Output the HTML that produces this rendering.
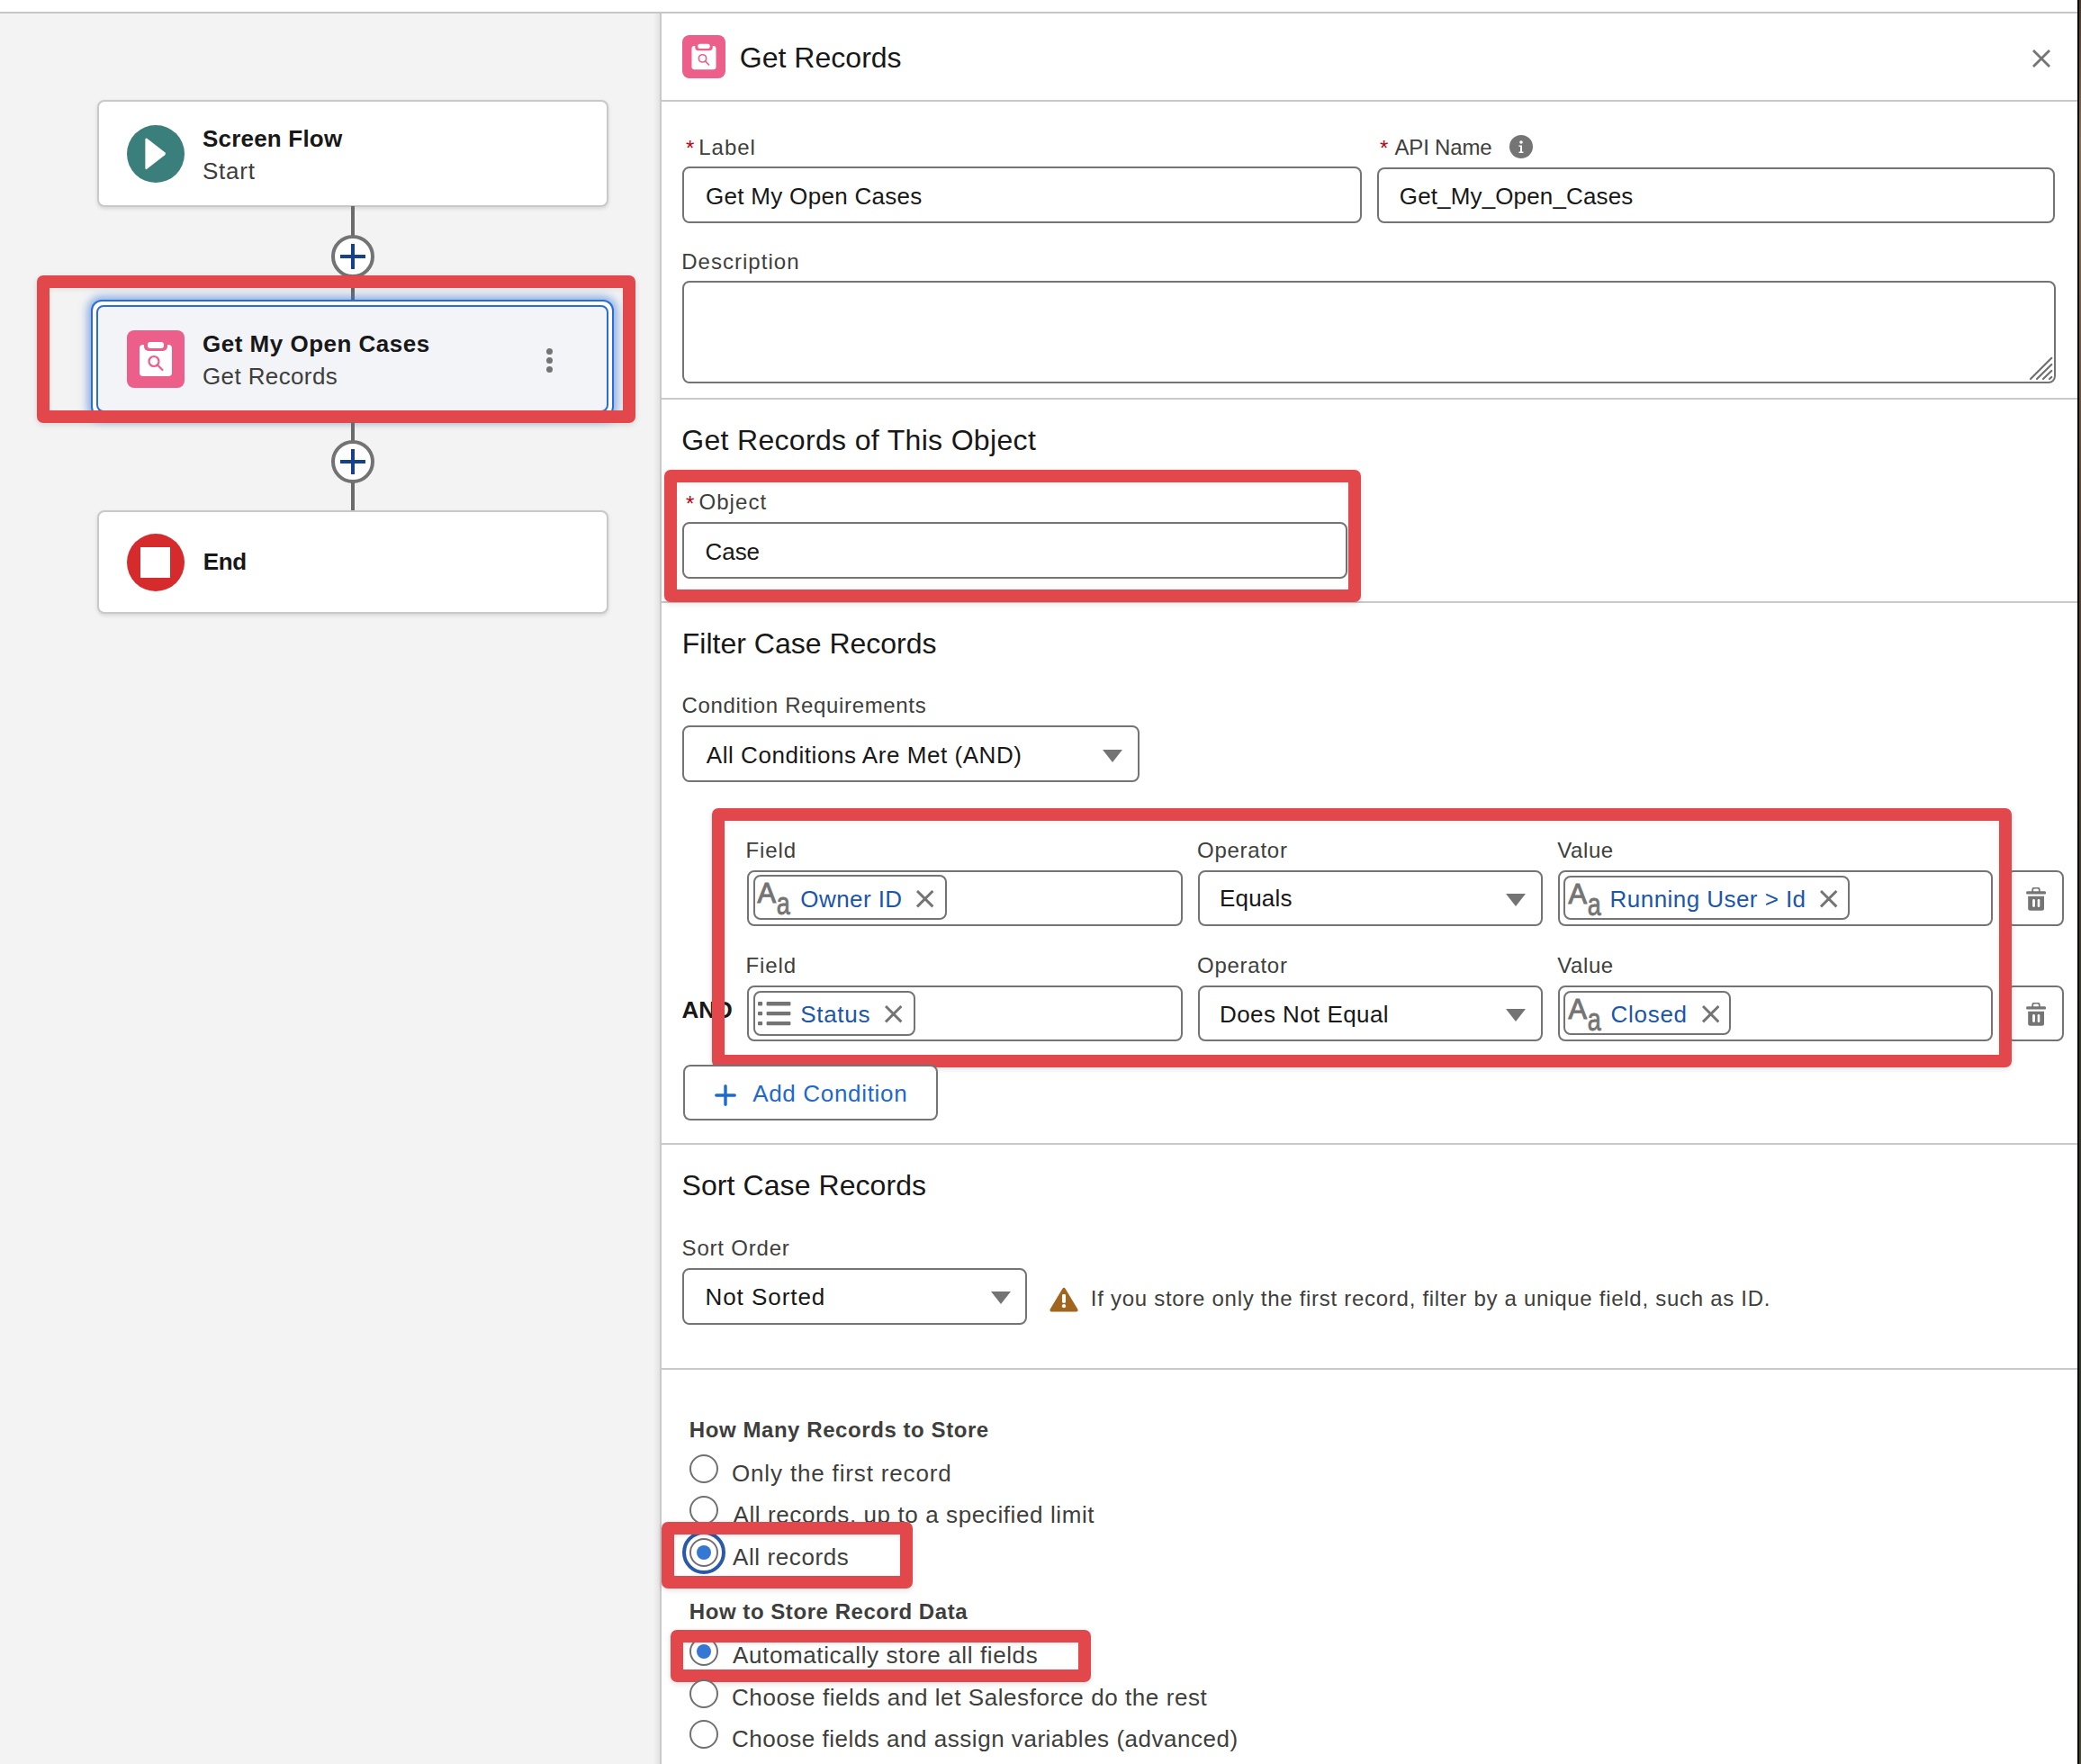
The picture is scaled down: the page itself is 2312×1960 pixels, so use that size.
<!DOCTYPE html>
<html><head><meta charset="utf-8">
<style>
*{box-sizing:border-box;margin:0;padding:0}
html,body{width:2312px;height:1960px;overflow:hidden;background:#fff;font-family:"Liberation Sans",sans-serif}
.a{position:absolute}
.t{position:absolute;white-space:pre;line-height:1;font-family:"Liberation Sans",sans-serif}
.s26{font-size:26px}
.s24{font-size:24px}
.s32{font-size:32px}
.dk{color:#181818}
.lb{color:#3e3e3c}
.req{color:#ba0517}
.lnk{color:#1b56aa}
.inp{position:absolute;border:2px solid #747474;border-radius:8px;background:#fff}
.pill{position:absolute;border:2px solid #747474;border-radius:8px;background:#fff}
.rbox{position:absolute;border:14px solid #e2474c;border-radius:7px;box-shadow:0 2px 6px rgba(0,0,0,.12),inset 0 2px 5px rgba(0,0,0,.07)}
.div{position:absolute;left:734px;width:1574px;height:2px;background:#c9c9c9}
.card{position:absolute;background:#fff;border:2px solid #c9c9c9;border-radius:8px;box-shadow:0 2px 4px rgba(0,0,0,.12)}
.conn{position:absolute;left:390px;width:4px;background:#6b6b6b}
.plus{position:absolute;left:368px;width:48px;height:48px;border:4px solid #737373;border-radius:50%;background:#fff}
.radio{position:absolute;left:766px;width:32px;height:32px;border:2px solid #707070;border-radius:50%;background:#fff}
</style></head><body>
<!-- top strip -->
<div class="a" style="left:0;top:0;width:2312px;height:13px;background:#fff"></div>
<div class="a" style="left:0;top:13px;width:2308px;height:2px;background:#c6c6c6"></div>
<!-- canvas -->
<div class="a" style="left:0;top:15px;width:734px;height:1945px;background:#f3f3f3"></div>
<div class="a" style="left:726px;top:15px;width:8px;height:1945px;background:linear-gradient(to right,rgba(0,0,0,0),rgba(0,0,0,.08))"></div>
<div class="a" style="left:733px;top:15px;width:2px;height:1945px;background:#c9c9c9"></div>
<!-- right dark strip -->
<div class="a" style="left:2308px;top:0;width:1.5px;height:1960px;background:#050403"></div>
<div class="a" style="left:2309.5px;top:0;width:2.5px;height:1960px;background:linear-gradient(#4a3a28,#8a7258 8%,#5a4631 30%,#3a3a2a 60%,#2d3a28 85%,#4a4a30)"></div>

<!-- CANVAS CONTENT -->
<div id="canvas">
<!-- start card -->
<div class="card" style="left:108px;top:111px;width:568px;height:119px"></div>
<div class="a" style="left:141px;top:139px;width:64px;height:64px;border-radius:50%;background:#3a7f7b"></div>
<svg class="a" style="left:141px;top:139px" width="64" height="64" viewBox="0 0 64 64"><path d="M20.4 16.3 Q20.4 13.6 22.6 15.1 L42.2 30.2 Q43.8 31.7 42.2 33.3 L22.6 48.6 Q20.4 50.1 20.4 47.4Z" fill="#fff"/></svg>
<div class="t s26" style="left:225.0px;top:140.5px;font-weight:700;color:#181818;letter-spacing:0.200px">Screen Flow</div>
<div class="t s26" style="left:225.0px;top:177px;color:#3e3e3c;letter-spacing:0.750px">Start</div>
<!-- connector 1 -->
<div class="conn" style="top:229px;height:34px"></div>
<div class="plus" style="top:261px"></div>
<div class="a" style="left:378px;top:283px;width:28px;height:4px;background:#17428a"></div>
<div class="a" style="left:390px;top:271px;width:4px;height:28px;background:#17428a"></div>
<div class="conn" style="top:308px;height:30px"></div>
<!-- selected card -->
<div class="a" style="left:101px;top:333px;width:581px;height:131px;border:2px solid #2a6dd6;border-radius:12px;background:#fff;box-shadow:0 0 10px 4px rgba(42,109,214,.5)"></div>
<div class="a" style="left:107px;top:339px;width:569px;height:119px;border:2px solid #2a6dd6;border-radius:8px;background:#f3f4f8"></div>
<div class="a" style="left:141px;top:367px;width:64px;height:64px;border-radius:8px;background:#ec5f8a"></div>
<svg class="a" style="left:141px;top:367px" width="64" height="64" viewBox="0 0 64 64">
<rect x="14" y="16" width="36" height="35" rx="4" fill="#fff"/>
<rect x="19" y="11" width="26" height="12" rx="5" fill="#ec5f8a"/>
<rect x="23" y="13" width="18" height="7" rx="3" fill="#fff"/>
<circle cx="30" cy="34.5" r="5.5" fill="none" stroke="#ec5f8a" stroke-width="2.2"/>
<line x1="34" y1="38.5" x2="39.5" y2="44" stroke="#ec5f8a" stroke-width="2.2" stroke-linecap="round"/>
</svg>
<div class="t s26" style="left:225.0px;top:369px;font-weight:700;color:#181818;letter-spacing:0.500px">Get My Open Cases</div>
<div class="t s26" style="left:225.0px;top:404.5px;color:#3e3e3c;letter-spacing:0.380px">Get Records</div>
<div class="a" style="left:607.3px;top:386.5px;width:7px;height:7px;border-radius:50%;background:#747474"></div>
<div class="a" style="left:607.3px;top:396.5px;width:7px;height:7px;border-radius:50%;background:#747474"></div>
<div class="a" style="left:607.3px;top:406.5px;width:7px;height:7px;border-radius:50%;background:#747474"></div>
<!-- red box 1 -->
<div class="rbox" style="left:41px;top:306px;width:665px;height:164px"></div>
<!-- connector 2 -->
<div class="conn" style="top:469px;height:22px"></div>
<div class="plus" style="top:489px"></div>
<div class="a" style="left:378px;top:511px;width:28px;height:4px;background:#17428a"></div>
<div class="a" style="left:390px;top:499px;width:4px;height:28px;background:#17428a"></div>
<div class="conn" style="top:536px;height:33px"></div>
<!-- end card -->
<div class="card" style="left:108px;top:567px;width:568px;height:115px"></div>
<div class="a" style="left:141px;top:593px;width:64px;height:64px;border-radius:50%;background:#d62b2d"></div>
<div class="a" style="left:156px;top:608px;width:33px;height:34px;background:#fff"></div>
<div class="t s26" style="left:225.7px;top:611px;font-weight:700;color:#181818;letter-spacing:-0.350px">End</div>
</div>

<!-- PANEL CONTENT -->
<div id="panel">
<!-- header -->
<div class="a" style="left:758px;top:39px;width:48px;height:48px;border-radius:8px;background:#ec5f8a"></div>
<svg class="a" style="left:758px;top:39px" width="48" height="48" viewBox="0 0 64 64">
<rect x="14" y="16" width="36" height="35" rx="4" fill="#fff"/>
<rect x="19" y="11" width="26" height="12" rx="5" fill="#ec5f8a"/>
<rect x="23" y="13" width="18" height="7" rx="3" fill="#fff"/>
<circle cx="30" cy="34.5" r="5.5" fill="none" stroke="#ec5f8a" stroke-width="2.2"/>
<line x1="34" y1="38.5" x2="39.5" y2="44" stroke="#ec5f8a" stroke-width="2.2" stroke-linecap="round"/>
</svg>
<div class="t s32 dk" style="left:821.8px;top:48px;letter-spacing:0.020px">Get Records</div>
<svg class="a" style="left:2258px;top:55px" width="20" height="20" viewBox="0 0 20 20"><path d="M1 1L19 19M19 1L1 19" stroke="#747474" stroke-width="2.8"/></svg>
<div class="div" style="top:111px"></div>

<!-- label / api name -->
<div class="t s24 req" style="left:762px;top:153px">*</div>
<div class="t s24 lb" style="left:776.2px;top:151.7px;letter-spacing:1.0px">Label</div>
<div class="inp" style="left:758px;top:185px;width:755px;height:63px"></div>
<div class="t s26 dk" style="left:784.0px;top:204.8px;letter-spacing:0.300px">Get My Open Cases</div>
<div class="t s24 req" style="left:1533px;top:153px">*</div>
<div class="t s24 lb" style="left:1549.5px;top:151.7px;letter-spacing:-0.186px">API Name</div>
<div class="a" style="left:1677px;top:150px;width:26px;height:26px;border-radius:50%;background:#747474"></div>
<svg class="a" style="left:1677px;top:150px" width="26" height="26" viewBox="0 0 26 26"><circle cx="13" cy="8" r="1.8" fill="#fff"/><path d="M10.5 11.5h3.5v7h1.5v1.5h-5v-1.5h1.5v-5.5h-1.5z" fill="#fff"/></svg>
<div class="inp" style="left:1530px;top:186px;width:753px;height:62px"></div>
<div class="t s26 dk" style="left:1554.8px;top:204.8px;letter-spacing:0.138px">Get_My_Open_Cases</div>

<!-- description -->
<div class="t s24 lb" style="left:757.2px;top:278.7px;letter-spacing:1.030px">Description</div>
<div class="inp" style="left:758px;top:312px;width:1526px;height:114px"></div>
<svg class="a" style="left:2250px;top:392px" width="34" height="34" viewBox="0 0 34 34"><path d="M6 29L29.3 5.8M13 29L29.3 13M20 29L29.3 20M27 29L29.3 27" stroke="#707070" stroke-width="2.2" stroke-linecap="round"/></svg>
<div class="div" style="top:442px"></div>

<!-- object -->
<div class="t s32 dk" style="left:757.2px;top:472.9px;letter-spacing:0.33px">Get Records of This Object</div>
<div class="t s24 req" style="left:762px;top:548px">*</div>
<div class="t s24 lb" style="left:776.4px;top:546.4px;letter-spacing:1.100px">Object</div>
<div class="inp" style="left:758px;top:580px;width:739px;height:63px"></div>
<div class="t s26 dk" style="left:783.6px;top:600.2px;letter-spacing:-0.100px">Case</div>
<div class="div" style="top:668px"></div>
<div class="rbox" style="left:738px;top:522px;width:774px;height:147px"></div>

<!-- filter -->
<div class="t s32 dk" style="left:757.8px;top:698.6px;letter-spacing:0.0px">Filter Case Records</div>
<div class="t s24 lb" style="left:757.6px;top:772.3px;letter-spacing:0.648px">Condition Requirements</div>
<div class="inp" style="left:758px;top:806px;width:508px;height:63px"></div>
<div class="t s26 dk" style="left:784.8px;top:826.3px;letter-spacing:0.552px">All Conditions Are Met (AND)</div>
<svg class="a" style="left:1225px;top:833px" width="22" height="14" viewBox="0 0 22 14"><path d="M0 0H22L11 14Z" fill="#747474"/></svg>

<!-- conditions -->
<div class="t s24 lb" style="left:828.6px;top:933.2px;letter-spacing:0.850px">Field</div>
<div class="t s24 lb" style="left:1330.0px;top:933.2px;letter-spacing:0.743px">Operator</div>
<div class="t s24 lb" style="left:1730.2px;top:933.2px;letter-spacing:0.600px">Value</div>
<div class="inp" style="left:830px;top:967px;width:484px;height:62px"></div>
<div class="pill" style="left:836.5px;top:972.3px;width:215px;height:50px"></div>
<div class="t s26 lnk" style="left:889.3px;top:985.5px;letter-spacing:0.429px">Owner ID</div>
<div class="inp" style="left:1330.5px;top:967px;width:383px;height:62px"></div>
<div class="t s26 dk" style="left:1355.0px;top:985.3px;letter-spacing:0.200px">Equals</div>
<svg class="a" style="left:1673px;top:993px" width="22" height="14" viewBox="0 0 22 14"><path d="M0 0H22L11 14Z" fill="#747474"/></svg>
<div class="inp" style="left:1730.5px;top:967px;width:483px;height:62px"></div>
<div class="pill" style="left:1737px;top:973px;width:318px;height:49px"></div>
<div class="t s26 lnk" style="left:1788.6px;top:985.5px;letter-spacing:0.450px">Running User &gt; Id</div>
<div class="inp" style="left:2229px;top:967px;width:64px;height:62px"></div>

<div class="t s24 lb" style="left:828.6px;top:1061px;letter-spacing:0.850px">Field</div>
<div class="t s24 lb" style="left:1330.0px;top:1061px;letter-spacing:0.743px">Operator</div>
<div class="t s24 lb" style="left:1730.2px;top:1061px;letter-spacing:0.600px">Value</div>
<div class="t s26" style="left:757.5px;top:1109px;font-weight:700;color:#181818">AND</div>
<div class="inp" style="left:830px;top:1095px;width:484px;height:62px"></div>
<div class="pill" style="left:836.5px;top:1100.5px;width:180px;height:50px"></div>
<div class="t s26 lnk" style="left:889.2px;top:1114px;letter-spacing:0.720px">Status</div>
<div class="inp" style="left:1330.5px;top:1095px;width:383px;height:62px"></div>
<div class="t s26 dk" style="left:1355.0px;top:1113.5px;letter-spacing:0.423px">Does Not Equal</div>
<svg class="a" style="left:1673px;top:1121px" width="22" height="14" viewBox="0 0 22 14"><path d="M0 0H22L11 14Z" fill="#747474"/></svg>
<div class="inp" style="left:1730.5px;top:1095px;width:483px;height:62px"></div>
<div class="pill" style="left:1737px;top:1101px;width:186px;height:49px"></div>
<div class="t s26 lnk" style="left:1789.6px;top:1114px;letter-spacing:0.700px">Closed</div>
<div class="inp" style="left:2229px;top:1095px;width:64px;height:62px"></div>
<div id="icons">
<svg class="a" style="left:841.5px;top:980px;overflow:visible" width="40" height="40" viewBox="0 0 40 40"><text x="-0.5" y="23.2" font-family="Liberation Sans" font-size="32" fill="#747474" stroke="#747474" stroke-width="1.1" textLength="20.5" lengthAdjust="spacingAndGlyphs">A</text><text x="20.8" y="35.6" font-family="Liberation Sans" font-size="34.5" fill="#747474" stroke="#747474" stroke-width="0.8" textLength="15" lengthAdjust="spacingAndGlyphs">a</text></svg>
<svg class="a" style="left:1018.4px;top:989.3px" width="19.4" height="19.4" viewBox="0 0 19.4 19.4"><path d="M1 1L18.4 18.4M18.4 1L1 18.4" stroke="#747474" stroke-width="2.9"/></svg>
<svg class="a" style="left:1742.5px;top:980.5px;overflow:visible" width="40" height="40" viewBox="0 0 40 40"><text x="-0.5" y="23.2" font-family="Liberation Sans" font-size="32" fill="#747474" stroke="#747474" stroke-width="1.1" textLength="20.5" lengthAdjust="spacingAndGlyphs">A</text><text x="20.8" y="35.6" font-family="Liberation Sans" font-size="34.5" fill="#747474" stroke="#747474" stroke-width="0.8" textLength="15" lengthAdjust="spacingAndGlyphs">a</text></svg>
<svg class="a" style="left:2022.4px;top:989.3px" width="19.4" height="19.4" viewBox="0 0 19.4 19.4"><path d="M1 1L18.4 18.4M18.4 1L1 18.4" stroke="#747474" stroke-width="2.9"/></svg>
<svg class="a" style="left:841.7px;top:1112.7px" width="37" height="27" viewBox="0 0 37 27"><rect x="0" y="0.0" width="5.1" height="4.4" rx="1" fill="#747474"/><rect x="9.6" y="0.0" width="26.8" height="4.4" rx="1.2" fill="#747474"/><rect x="0" y="10.899999999999999" width="5.1" height="4.4" rx="1" fill="#747474"/><rect x="9.6" y="10.899999999999999" width="26.8" height="4.4" rx="1.2" fill="#747474"/><rect x="0" y="21.900000000000002" width="5.1" height="4.4" rx="1" fill="#747474"/><rect x="9.6" y="21.900000000000002" width="26.8" height="4.4" rx="1.2" fill="#747474"/></svg>
<svg class="a" style="left:983.3px;top:1117.2px" width="19.4" height="19.4" viewBox="0 0 19.4 19.4"><path d="M1 1L18.4 18.4M18.4 1L1 18.4" stroke="#747474" stroke-width="2.9"/></svg>
<svg class="a" style="left:1742.5px;top:1108.5px;overflow:visible" width="40" height="40" viewBox="0 0 40 40"><text x="-0.5" y="23.2" font-family="Liberation Sans" font-size="32" fill="#747474" stroke="#747474" stroke-width="1.1" textLength="20.5" lengthAdjust="spacingAndGlyphs">A</text><text x="20.8" y="35.6" font-family="Liberation Sans" font-size="34.5" fill="#747474" stroke="#747474" stroke-width="0.8" textLength="15" lengthAdjust="spacingAndGlyphs">a</text></svg>
<svg class="a" style="left:1890.7px;top:1117.2px" width="19.4" height="19.4" viewBox="0 0 19.4 19.4"><path d="M1 1L18.4 18.4M18.4 1L1 18.4" stroke="#747474" stroke-width="2.9"/></svg>
<svg class="a" style="left:2250.8px;top:986px" width="23" height="26" viewBox="0 0 23 26"><rect x="0" y="4.3" width="22.2" height="3.3" rx="1.6" fill="#747474"/><path d="M7.2 5V2.8Q7.2 0.6 9.4 0.6H12.6Q14.8 0.6 14.8 2.8V5" fill="none" stroke="#747474" stroke-width="1.8"/><path d="M2.2 9.8H20V23.3Q20 25.8 17.5 25.8H4.7Q2.2 25.8 2.2 23.3Z" fill="#747474"/><rect x="7.1" y="13" width="2.9" height="9" rx="1.4" fill="#fff"/><rect x="12.7" y="13" width="2.6" height="9" rx="1.3" fill="#fff"/></svg>
<svg class="a" style="left:2250.8px;top:1114px" width="23" height="26" viewBox="0 0 23 26"><rect x="0" y="4.3" width="22.2" height="3.3" rx="1.6" fill="#747474"/><path d="M7.2 5V2.8Q7.2 0.6 9.4 0.6H12.6Q14.8 0.6 14.8 2.8V5" fill="none" stroke="#747474" stroke-width="1.8"/><path d="M2.2 9.8H20V23.3Q20 25.8 17.5 25.8H4.7Q2.2 25.8 2.2 23.3Z" fill="#747474"/><rect x="7.1" y="13" width="2.9" height="9" rx="1.4" fill="#fff"/><rect x="12.7" y="13" width="2.6" height="9" rx="1.3" fill="#fff"/></svg>
</div>
<div class="rbox" style="left:791px;top:898px;width:1444px;height:288px"></div>

<!-- add condition -->
<div class="inp" style="left:758.7px;top:1183px;width:283px;height:62px"></div>
<svg class="a" style="left:794px;top:1205px" width="24" height="24" viewBox="0 0 24 24"><path d="M12 1.8V22.2M1.8 12H22.2" stroke="#1e69cd" stroke-width="3.4" stroke-linecap="round"/></svg>
<div class="t s26" style="color:#1e69cd;left:836.2px;top:1202px;letter-spacing:0.675px">Add Condition</div>
<div class="div" style="top:1269.5px"></div>

<!-- sort -->
<div class="t s32 dk" style="left:757.6px;top:1300.9px;letter-spacing:0.07px">Sort Case Records</div>
<div class="t s24 lb" style="left:757.6px;top:1374.8px;letter-spacing:0.800px">Sort Order</div>
<div class="inp" style="left:758px;top:1408.5px;width:383px;height:63px"></div>
<div class="t s26 dk" style="left:783.4px;top:1427.5px;letter-spacing:0.96px">Not Sorted</div>
<svg class="a" style="left:1101px;top:1435px" width="22" height="14" viewBox="0 0 22 14"><path d="M0 0H22L11 14Z" fill="#747474"/></svg>
<svg class="a" style="left:1165px;top:1430px" width="34" height="29" viewBox="0 0 34 29"><path d="M17 0.8Q18 0.8 18.7 1.9L32.5 25Q33.1 26.9 31.3 27.5H2.7Q0.9 26.9 1.5 25L15.3 1.9Q16 0.8 17 0.8Z" fill="#a0661f"/><rect x="15" y="8" width="4" height="9.8" rx="1.4" fill="#fff"/><circle cx="17" cy="21.2" r="2.1" fill="#fff"/></svg>
<div class="t s24 lb" style="left:1211.8px;top:1431px;letter-spacing:0.717px">If you store only the first record, filter by a unique field, such as ID.</div>
<div class="div" style="top:1519.5px"></div>

<!-- store -->
<div class="t s24" style="left:765.8px;top:1576.6px;font-weight:700;color:#3e3e3c;letter-spacing:0.571px">How Many Records to Store</div>
<div class="radio" style="top:1616px"></div>
<div class="t s26 lb" style="left:813.0px;top:1624px;letter-spacing:0.840px">Only the first record</div>
<div class="radio" style="top:1662px"></div>
<div class="t s26 lb" style="left:814.5px;top:1670px;letter-spacing:0.600px">All records, up to a specified limit</div>
<div class="a" style="left:758px;top:1701px;width:48px;height:48px;border:4px solid #2a59a8;border-radius:50%;background:#fff"></div>
<div class="radio" style="top:1709px"></div>
<div class="a" style="left:774px;top:1717px;width:16px;height:16px;border-radius:50%;background:#3478d4"></div>
<div class="t s26 lb" style="left:814.0px;top:1717px;letter-spacing:0.600px">All records</div>
<div class="rbox" style="left:735px;top:1691px;width:279px;height:74px"></div>

<div class="t s24" style="left:765.8px;top:1778.5px;font-weight:700;color:#3e3e3c;letter-spacing:0.552px">How to Store Record Data</div>
<div class="radio" style="top:1818.5px"></div>
<div class="a" style="left:774px;top:1826.5px;width:16px;height:16px;border-radius:50%;background:#3478d4"></div>
<div class="t s26 lb" style="left:814.0px;top:1826.3px;letter-spacing:0.617px">Automatically store all fields</div>
<div class="rbox" style="left:745px;top:1811px;width:467px;height:58px"></div>
<div class="radio" style="top:1865.5px"></div>
<div class="t s26 lb" style="left:813px;top:1872.5px;letter-spacing:0.577px">Choose fields and let Salesforce do the rest</div>
<div class="radio" style="top:1911px"></div>
<div class="t s26 lb" style="left:813.0px;top:1918.6px;letter-spacing:0.525px">Choose fields and assign variables (advanced)</div>
</div>

</body></html>
